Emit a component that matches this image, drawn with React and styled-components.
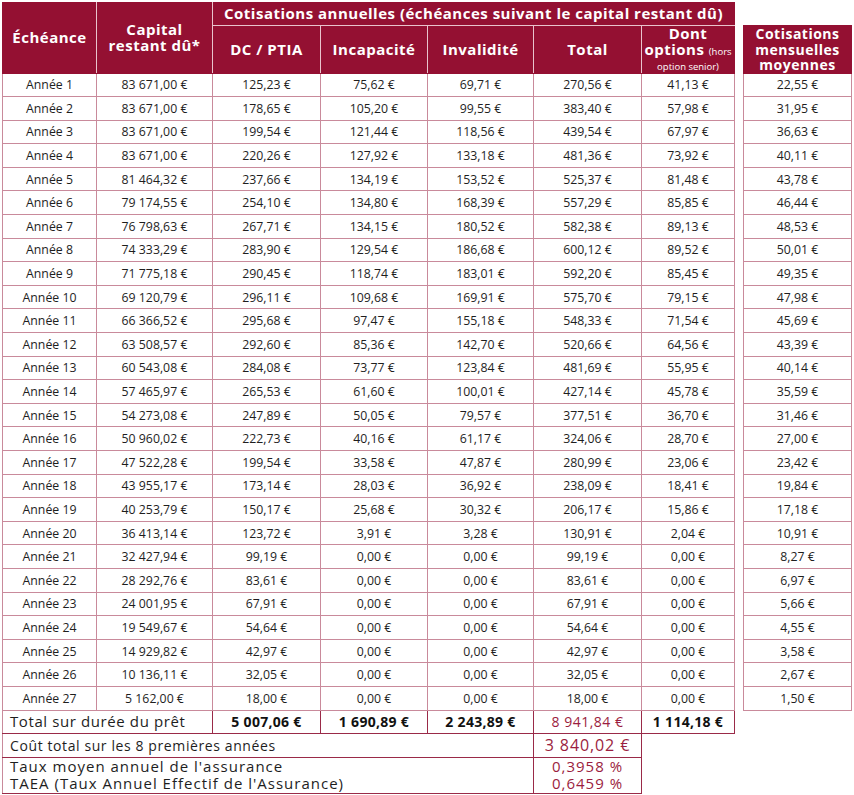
import React from 'react';
import styled, { createGlobalStyle } from 'styled-components';

const GlobalStyle = createGlobalStyle`
  body {
    margin: 0;
    background: #ffffff;
    font-family: "Open Sans", "Noto Sans", sans-serif;
    color: #1e1e1e;
  }
`;

const MAROON = '#941032';
const LINE = '#c98a9b';
const DARK_LINE = '#9a2a48';
const RED_TEXT = '#9b1d40';

const Page = styled.div`
  display: flex;
  align-items: flex-start;
  gap: 8px;
  padding: 2px;
`;

const Table = styled.table`
  border-collapse: collapse;
  table-layout: fixed;
  width: ${(p) => p.$width}px;
  margin-top: ${(p) => p.$offset || 0}px;
`;

const HeadCell = styled.th`
  background: ${MAROON};
  color: #ffffff;
  font-weight: 700;
  font-size: ${(p) => p.$size || 15}px;
  line-height: 15.5px;
  letter-spacing: 0.5px;
  text-align: center;
  vertical-align: middle;
  padding: 0 2px;
  border: 1px solid ${MAROON};
  border-left-color: #e9c3cc;
  border-right-color: #e9c3cc;
  border-bottom-color: ${(p) => (p.$underline ? '#e9c3cc' : MAROON)};

  &:first-child {
    border-left-color: ${MAROON};
  }
  &:last-child {
    border-right-color: ${MAROON};
  }
`;

const Small = styled.span`
  font-size: 9.5px;
  font-weight: 400;
  letter-spacing: 0;
  line-height: 0;
`;

const HeadRow = styled.tr`
  height: ${(p) => p.$h}px;
`;

const DataRow = styled.tr`
  height: 23.6px;
`;

const Cell = styled.td`
  border: 1px solid ${LINE};
  font-size: 12.3px;
  text-align: center;
  vertical-align: middle;
  padding: 0;
  white-space: nowrap;
`;

const FootRow = styled.tr`
  height: ${(p) => p.$h}px;
`;

const FootLabel = styled.td`
  border: 1px solid ${DARK_LINE};
  border-left-color: ${LINE};
  font-size: ${(p) => p.$size || 14}px;
  letter-spacing: ${(p) => p.$spacing || 0.3}px;
  line-height: 17px;
  text-align: left;
  vertical-align: middle;
  padding: 0 0 0 7px;
  white-space: nowrap;
`;

const FootValue = styled.td`
  border: 1px solid ${DARK_LINE};
  font-size: ${(p) => p.$size || 13}px;
  font-weight: ${(p) => (p.$bold ? 700 : 400)};
  color: ${(p) => (p.$red ? RED_TEXT : '#111111')};
  letter-spacing: ${(p) => p.$spacing || 0.3}px;
  line-height: 17px;
  text-align: center;
  vertical-align: middle;
  padding: 0;
  white-space: nowrap;
`;

const rows = [
  ['83 671,00', '125,23', '75,62', '69,71', '270,56', '41,13', '22,55'],
  ['83 671,00', '178,65', '105,20', '99,55', '383,40', '57,98', '31,95'],
  ['83 671,00', '199,54', '121,44', '118,56', '439,54', '67,97', '36,63'],
  ['83 671,00', '220,26', '127,92', '133,18', '481,36', '73,92', '40,11'],
  ['81 464,32', '237,66', '134,19', '153,52', '525,37', '81,48', '43,78'],
  ['79 174,55', '254,10', '134,80', '168,39', '557,29', '85,85', '46,44'],
  ['76 798,63', '267,71', '134,15', '180,52', '582,38', '89,13', '48,53'],
  ['74 333,29', '283,90', '129,54', '186,68', '600,12', '89,52', '50,01'],
  ['71 775,18', '290,45', '118,74', '183,01', '592,20', '85,45', '49,35'],
  ['69 120,79', '296,11', '109,68', '169,91', '575,70', '79,15', '47,98'],
  ['66 366,52', '295,68', '97,47', '155,18', '548,33', '71,54', '45,69'],
  ['63 508,57', '292,60', '85,36', '142,70', '520,66', '64,56', '43,39'],
  ['60 543,08', '284,08', '73,77', '123,84', '481,69', '55,95', '40,14'],
  ['57 465,97', '265,53', '61,60', '100,01', '427,14', '45,78', '35,59'],
  ['54 273,08', '247,89', '50,05', '79,57', '377,51', '36,70', '31,46'],
  ['50 960,02', '222,73', '40,16', '61,17', '324,06', '28,70', '27,00'],
  ['47 522,28', '199,54', '33,58', '47,87', '280,99', '23,06', '23,42'],
  ['43 955,17', '173,14', '28,03', '36,92', '238,09', '18,41', '19,84'],
  ['40 253,79', '150,17', '25,68', '30,32', '206,17', '15,86', '17,18'],
  ['36 413,14', '123,72', '3,91', '3,28', '130,91', '2,04', '10,91'],
  ['32 427,94', '99,19', '0,00', '0,00', '99,19', '0,00', '8,27'],
  ['28 292,76', '83,61', '0,00', '0,00', '83,61', '0,00', '6,97'],
  ['24 001,95', '67,91', '0,00', '0,00', '67,91', '0,00', '5,66'],
  ['19 549,67', '54,64', '0,00', '0,00', '54,64', '0,00', '4,55'],
  ['14 929,82', '42,97', '0,00', '0,00', '42,97', '0,00', '3,58'],
  ['10 136,11', '32,05', '0,00', '0,00', '32,05', '0,00', '2,67'],
  ['5 162,00', '18,00', '0,00', '0,00', '18,00', '0,00', '1,50'],
];

const mainCols = [94, 116, 108, 107, 106, 108, 93];

const App = () => (
  <>
    <GlobalStyle />
    <Page>
      <Table $width={732}>
        <colgroup>
          {mainCols.map((w, i) => (
            <col key={i} style={{ width: w }} />
          ))}
        </colgroup>
        <thead>
          <HeadRow $h={23}>
            <HeadCell rowSpan={2}>Échéance</HeadCell>
            <HeadCell rowSpan={2}>
              Capital
              <br />
              restant dû*
            </HeadCell>
            <HeadCell colSpan={5} $underline>
              Cotisations annuelles (échéances suivant le capital restant dû)
            </HeadCell>
          </HeadRow>
          <HeadRow $h={47}>
            <HeadCell>DC / PTIA</HeadCell>
            <HeadCell>Incapacité</HeadCell>
            <HeadCell>Invalidité</HeadCell>
            <HeadCell>Total</HeadCell>
            <HeadCell>
              Dont
              <br />
              options <Small>(hors</Small>
              <br />
              <Small>option senior)</Small>
            </HeadCell>
          </HeadRow>
        </thead>
        <tbody>
          {rows.map((r, i) => (
            <DataRow key={i}>
              <Cell>Année {i + 1}</Cell>
              {r.slice(0, 6).map((v, j) => (
                <Cell key={j}>{v} €</Cell>
              ))}
            </DataRow>
          ))}
          <FootRow $h={23}>
            <FootLabel colSpan={2} $size={15} $spacing={0.6}>
              Total sur durée du prêt
            </FootLabel>
            <FootValue $bold $size={14}>5 007,06 €</FootValue>
            <FootValue $bold $size={14}>1 690,89 €</FootValue>
            <FootValue $bold $size={14}>2 243,89 €</FootValue>
            <FootValue $red $size={14} $spacing={0.5}>8 941,84 €</FootValue>
            <FootValue $bold $size={14}>1 114,18 €</FootValue>
          </FootRow>
          <FootRow $h={24}>
            <FootLabel colSpan={5} $size={14} $spacing={0.6}>
              Coût total sur les 8 premières années
            </FootLabel>
            <FootValue $red $size={16} $spacing={0.9}>
              3 840,02 €
            </FootValue>
          </FootRow>
          <FootRow $h={36}>
            <FootLabel colSpan={5} $size={15} $spacing={1}>
              Taux moyen annuel de l'assurance
              <br />
              TAEA (Taux Annuel Effectif de l'Assurance)
            </FootLabel>
            <FootValue $red $size={15} $spacing={1}>
              0,3958 %
              <br />
              0,6459 %
            </FootValue>
          </FootRow>
        </tbody>
      </Table>

      <Table $width={109} $offset={23}>
        <thead>
          <HeadRow $h={47}>
            <HeadCell $size={14}>
              Cotisations
              <br />
              mensuelles
              <br />
              moyennes
            </HeadCell>
          </HeadRow>
        </thead>
        <tbody>
          {rows.map((r, i) => (
            <DataRow key={i}>
              <Cell>{r[6]} €</Cell>
            </DataRow>
          ))}
        </tbody>
      </Table>
    </Page>
  </>
);

export default App;
